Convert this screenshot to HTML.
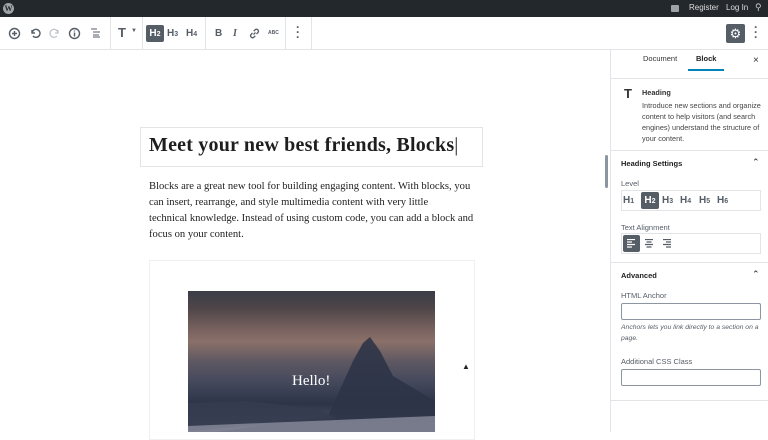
<!DOCTYPE html>
<html><head><meta charset="utf-8"><style>
*{box-sizing:border-box;margin:0;padding:0}
body{width:768px;height:432px;overflow:hidden;background:#fff;font-family:"Liberation Sans",sans-serif;position:relative;color:#1e1e1e}
.abs{position:absolute}
#admin{left:0;top:0;width:768px;height:17px;background:#23282d}
#tb{left:0;top:17px;width:768px;height:33px;border-bottom:1px solid #e2e4e7;background:#fff}
.sep{position:absolute;top:0;width:1px;height:32px;background:#e2e4e7}
.ic{position:absolute;font-size:11px;color:#555d66}
.side{left:610px;top:50px;width:158px;height:382px;border-left:1px solid #e2e4e7;background:#fff}
.lbl{position:absolute;font-size:7.5px;color:#555d66}
.hdr{position:absolute;font-size:7.5px;font-weight:bold;color:#1e1e1e}
.inp{position:absolute;left:10px;width:140px;border:1px solid #8d96a0;border-radius:2px;height:17px}
.serif{font-family:"Liberation Serif",serif}
p.par{position:absolute;left:149px;top:179px;width:340px;font-family:"Liberation Serif",serif;font-size:10.6px;letter-spacing:0;line-height:16px;color:#222;white-space:nowrap}
</style></head><body>
<div id="admin" class="abs">
 <div class="abs" style="left:3px;top:3px;width:11px;height:11px;border-radius:50%;background:#9ea3a8;color:#23282d;font:bold 8px 'Liberation Serif',serif;text-align:center;line-height:11px">W</div>
 <div class="abs" style="left:671px;top:5px;width:8px;height:7px;background:#9ea3a8;border-radius:1px"></div>
 <div class="abs" style="left:689px;top:3px;font-size:8px;color:#ddd">Register</div>
 <div class="abs" style="left:726px;top:3px;font-size:8px;color:#ddd">Log In</div>
 <div class="abs" style="left:755px;top:2px;font-size:9px;color:#ccc">&#9906;</div>
</div>
<div id="tb" class="abs">
 <svg class="abs" style="left:8px;top:10px" width="13" height="13"><circle cx="6.5" cy="6.5" r="5" fill="none" stroke="#555d66" stroke-width="1.4"/><path d="M6.5 4v5M4 6.5h5" stroke="#555d66" stroke-width="1.4"/></svg>
 <svg class="abs" style="left:29px;top:10px" width="12" height="12"><path d="M3 3v3h3M3 6a4 4 0 1 1 1 3" fill="none" stroke="#555d66" stroke-width="1.4"/></svg>
 <svg class="abs" style="left:49px;top:10px" width="12" height="12"><path d="M9 3v3H6M9 6a4 4 0 1 0-1 3" fill="none" stroke="#c0c4c8" stroke-width="1.3"/></svg>
 <svg class="abs" style="left:68px;top:10px" width="13" height="13"><circle cx="6.5" cy="6.5" r="5" fill="none" stroke="#555d66" stroke-width="1.4"/><path d="M6.5 5.5v4M6.5 3.5v1" stroke="#555d66" stroke-width="1.4"/></svg>
 <svg class="abs" style="left:90px;top:11px" width="11" height="10"><path d="M1 1h6M3 4h7M3 7h6M3 9h7" stroke="#555d66" stroke-width="1.1"/></svg>
 <div class="sep" style="left:110px"></div>
 <div class="ic" style="left:118px;top:8px;font-size:13px;font-weight:bold">T</div><div class="ic" style="left:131px;top:11px;font-size:6px">&#9660;</div>
 <div class="sep" style="left:142px"></div>
 <div class="abs" style="left:146px;top:8px;width:18px;height:17px;background:#555d66;border-radius:2px;color:#fff;font-size:10px;font-weight:bold;text-align:center;line-height:17px">H<span style="font-size:7px">2</span></div>
 <div class="ic" style="left:167px;top:11px;font-size:10px;font-weight:bold">H<span style="font-size:7px">3</span></div>
 <div class="ic" style="left:186px;top:11px;font-size:10px;font-weight:bold">H<span style="font-size:7px">4</span></div>
 <div class="sep" style="left:205px"></div>
 <div class="ic" style="left:215px;top:11px;font-size:10px;font-weight:bold">B</div>
 <div class="ic" style="left:233px;top:11px;font-size:10px;font-style:italic;font-weight:bold;font-family:'Liberation Serif',serif">I</div>
 <svg class="abs" style="left:249px;top:11px" width="11" height="11"><path d="M4.5 6.5l2-2M3.5 5L2 6.5a2 2 0 0 0 2.8 2.8L6.3 7.8M7.5 6L9 4.5a2 2 0 0 0-2.8-2.8L4.7 3.2" fill="none" stroke="#555d66" stroke-width="1.3"/></svg>
 <div class="ic" style="left:268px;top:13px;font-size:5px;font-weight:bold">ABC</div>
 <div class="sep" style="left:285px"></div>
 <div class="ic" style="left:296px;top:8px;font-size:12px;line-height:5px;font-weight:bold">·<br>·<br>·</div>
 <div class="sep" style="left:311px"></div>
 <div class="abs" style="left:726px;top:7px;width:19px;height:19px;background:#555d66;border-radius:2px;color:#fff;font-size:13px;text-align:center;line-height:19px">&#9881;</div>
 <div class="ic" style="left:754px;top:8px;font-size:12px;line-height:5px;font-weight:bold">·<br>·<br>·</div>
</div>
<div class="abs" style="left:140px;top:127px;width:343px;height:40px;border:1px solid #e2e4e7"></div>
<div class="abs serif" style="left:149px;top:134px;font-size:20px;letter-spacing:0.2px;font-weight:bold;color:#1e1e1e;white-space:nowrap">Meet your new best friends, Blocks<span style="font-weight:normal">|</span></div>
<p class="par">Blocks are a great new tool for building engaging content. With blocks, you<br>can insert, rearrange, and style multimedia content with very little<br>technical knowledge. Instead of using custom code, you can add a block and<br>focus on your content.</p>
<div class="abs" style="left:149px;top:260px;width:326px;height:180px;border:1px solid #eef0f1"></div>
<div class="abs" style="left:188px;top:291px;width:247px;height:141px;overflow:hidden;background:linear-gradient(180deg,#3a3c48 0%,#4e4548 12%,#7a6360 28%,#8a7068 36%,#5e5862 50%,#45495c 64%,#2d3448 80%,#5a5e70 100%)">
 <svg width="247" height="141" style="position:absolute;left:0;top:0"><path d="M140 125 L165 70 L175 52 L182 46 L192 60 L205 85 L247 110 L247 141 L0 141 L0 145 Z" fill="#2e3447" opacity=".9"/><path d="M0 140 L0 112 L60 110 L130 118 L150 128 Z" fill="#353c50" opacity=".9"/><path d="M0 135 L247 125 L247 141 L0 141Z" fill="#8a8c9c" opacity=".8"/></svg>
 <div class="abs serif" style="left:104px;top:82px;color:#fff;font-size:15px">Hello!</div>
</div>
<div class="abs" style="left:605px;top:155px;width:3px;height:33px;background:#8d96a0;border-radius:2px"></div>
<div class="abs side">
 <div class="abs" style="left:32px;top:4px;font-size:7.5px;color:#333">Document</div>
 <div class="abs" style="left:85px;top:4px;font-size:7.5px;font-weight:bold">Block</div>
 <div class="abs" style="left:77px;top:19px;width:36px;height:2px;background:#0085ba"></div>
 <div class="abs" style="left:142px;top:5px;font-size:10px;color:#333">×</div>
 <div class="abs" style="left:0;top:28px;width:158px;height:1px;background:#e2e4e7"></div>
 <div class="abs" style="left:13px;top:36px;font-size:13px;font-weight:bold;color:#333">T</div>
 <div class="abs" style="left:31px;top:38px;font-size:7.3px;font-weight:bold;color:#333">Heading</div>
 <div class="abs" style="left:31px;top:50px;width:125px;font-size:7.3px;line-height:11px;color:#444">Introduce new sections and organize content to help visitors (and search engines) understand the structure of your content.</div>
 <div class="abs" style="left:0;top:100px;width:158px;height:1px;background:#e2e4e7"></div>
 <div class="hdr" style="left:10px;top:109px">Heading Settings</div><div class="abs" style="left:141px;top:107px;font-size:9px">&#8963;</div>
 <div class="lbl" style="left:10px;top:129px">Level</div>
 <div class="abs" style="left:10px;top:140px;width:140px;height:21px;border:1px solid #e2e4e7"></div>
 <div class="abs" style="left:12px;top:145px;font-size:10px;font-weight:bold;color:#555d66">H<small style="font-size:7px">1</small></div>
 <div class="abs" style="left:30px;top:142px;width:18px;height:17px;background:#555d66;border-radius:2px;color:#fff;font-size:10px;font-weight:bold;text-align:center;line-height:17px">H<span style="font-size:7px">2</span></div>
 <div class="abs" style="left:51px;top:145px;font-size:10px;font-weight:bold;color:#555d66">H<small style="font-size:7px">3</small></div>
 <div class="abs" style="left:69px;top:145px;font-size:10px;font-weight:bold;color:#555d66">H<small style="font-size:7px">4</small></div>
 <div class="abs" style="left:88px;top:145px;font-size:10px;font-weight:bold;color:#555d66">H<small style="font-size:7px">5</small></div>
 <div class="abs" style="left:106px;top:145px;font-size:10px;font-weight:bold;color:#555d66">H<small style="font-size:7px">6</small></div>
 <div class="lbl" style="left:10px;top:173px">Text Alignment</div>
 <div class="abs" style="left:10px;top:183px;width:140px;height:21px;border:1px solid #e2e4e7"></div>
 <div class="abs" style="left:12px;top:185px;width:17px;height:17px;background:#555d66;border-radius:2px"></div>
 <svg class="abs" style="left:16px;top:189px" width="60" height="9"><g stroke="#fff" stroke-width="1.2"><path d="M0 .5h8M0 3h5M0 5.5h8M0 8h5"/></g><g stroke="#555d66" stroke-width="1.2"><path d="M18 .5h8M19.5 3h5M18 5.5h8M19.5 8h5M36 .5h8M39 3h5M36 5.5h8M39 8h5"/></g></svg>
 <div class="abs" style="left:0;top:212px;width:158px;height:1px;background:#e2e4e7"></div>
 <div class="hdr" style="left:10px;top:221px">Advanced</div><div class="abs" style="left:141px;top:219px;font-size:9px">&#8963;</div>
 <div class="lbl" style="left:10px;top:241px">HTML Anchor</div>
 <div class="inp" style="top:253px"></div>
 <div class="abs" style="left:10px;top:272px;width:145px;font-size:6.8px;line-height:11px;font-style:italic;color:#555d66">Anchors lets you link directly to a section on a page.</div>
 <div class="lbl" style="left:10px;top:307px">Additional CSS Class</div>
 <div class="inp" style="top:319px"></div>
 <div class="abs" style="left:0;top:350px;width:158px;height:1px;background:#e2e4e7"></div>
</div>
<div class="abs" style="left:462px;top:362px;font-size:8px;color:#222">&#9650;</div>
</body></html>
